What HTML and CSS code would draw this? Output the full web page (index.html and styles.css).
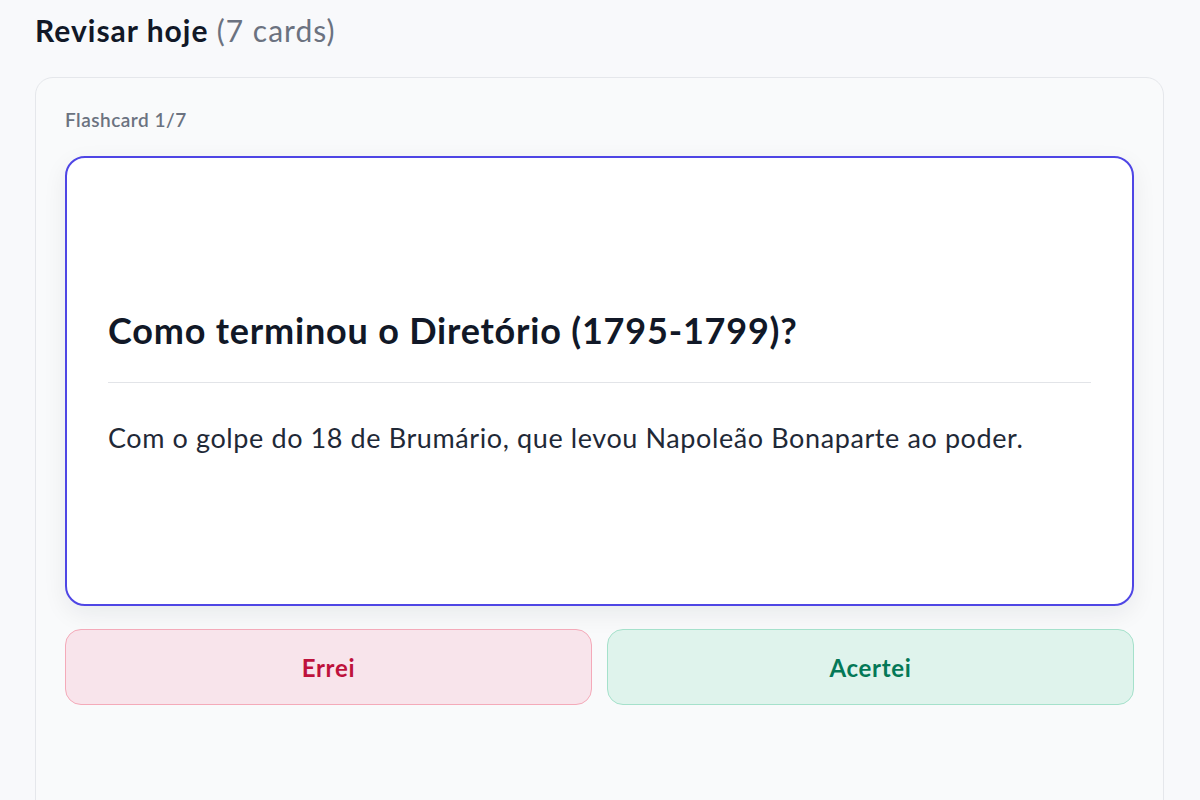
FILE: index.html
```html
<!DOCTYPE html>
<html lang="pt">
<head>
<meta charset="utf-8">
<link rel="stylesheet" href="styles.css">
</head>
<body>
<main class="page">
  <h2 class="heading">Revisar hoje <span class="count">(7 cards)</span></h2>
  <section class="panel">
    <div class="label">Flashcard 1/7</div>
    <div class="card">
      <div class="question">Como terminou o Diretório (1795-1799)?</div>
      <hr class="divider">
      <div class="answer">Com o golpe do 18 de Brumário, que levou Napoleão Bonaparte ao poder.</div>
    </div>
    <div class="actions">
      <button class="btn btn-wrong">Errei</button>
      <button class="btn btn-right">Acertei</button>
    </div>
  </section>
</main>
</body>
</html>
```

FILE: styles.css
```css
* { box-sizing: border-box; }
html, body { margin: 0; padding: 0; }
body {
  background: #f8f9fb;
  font-family: "Lato", "Noto Sans", sans-serif;
  color: #111827;
  height: 800px;
  overflow: hidden;
}
.page {
  padding: 12px 36px 0 35px;
}
.heading {
  margin: 0 0 29px 0;
  font-size: 30px;
  font-weight: 700;
  line-height: 36px;
  letter-spacing: 1px;
  color: #111827;
}
.count {
  font-weight: 400;
  color: #6b7280;
}
.panel {
  border: 1px solid #e5e7eb;
  border-radius: 18px;
  background: #f9fafb;
  padding: 30px 29px 120px 29px;
  height: 760px;
}
.label {
  font-size: 19px;
  font-weight: 600;
  letter-spacing: 0.5px;
  color: #6b7280;
  line-height: 24px;
  margin-bottom: 24px;
}
.card {
  height: 450px;
  background: #fff;
  border: 2px solid #4f46e5;
  border-radius: 20px;
  box-shadow: 0 8px 24px rgba(17, 24, 39, 0.07);
  display: flex;
  flex-direction: column;
  justify-content: center;
  padding: 0 41px;
}
.question {
  font-size: 36px;
  font-weight: 700;
  line-height: 44px;
  letter-spacing: 0.8px;
  color: #111827;
}
.divider {
  border: 0;
  border-top: 1px solid #e2e4e8;
  margin: 30px 0 38px 0;
}
.answer {
  font-size: 27px;
  line-height: 34px;
  letter-spacing: 0.6px;
  color: #1f2937;
}
.actions {
  display: grid;
  grid-template-columns: 1fr 1fr;
  gap: 15px;
  margin-top: 23px;
}
.btn {
  height: 76px;
  border-radius: 16px;
  font-family: inherit;
  font-size: 24px;
  font-weight: 700;
  letter-spacing: 0.7px;
  cursor: pointer;
}
.btn-wrong {
  background: #f8e4eb;
  border: 1.5px solid #f4aab9;
  color: #be123c;
}
.btn-right {
  background: #dff3ec;
  border: 1.5px solid #a5e1cb;
  color: #047857;
}
```
